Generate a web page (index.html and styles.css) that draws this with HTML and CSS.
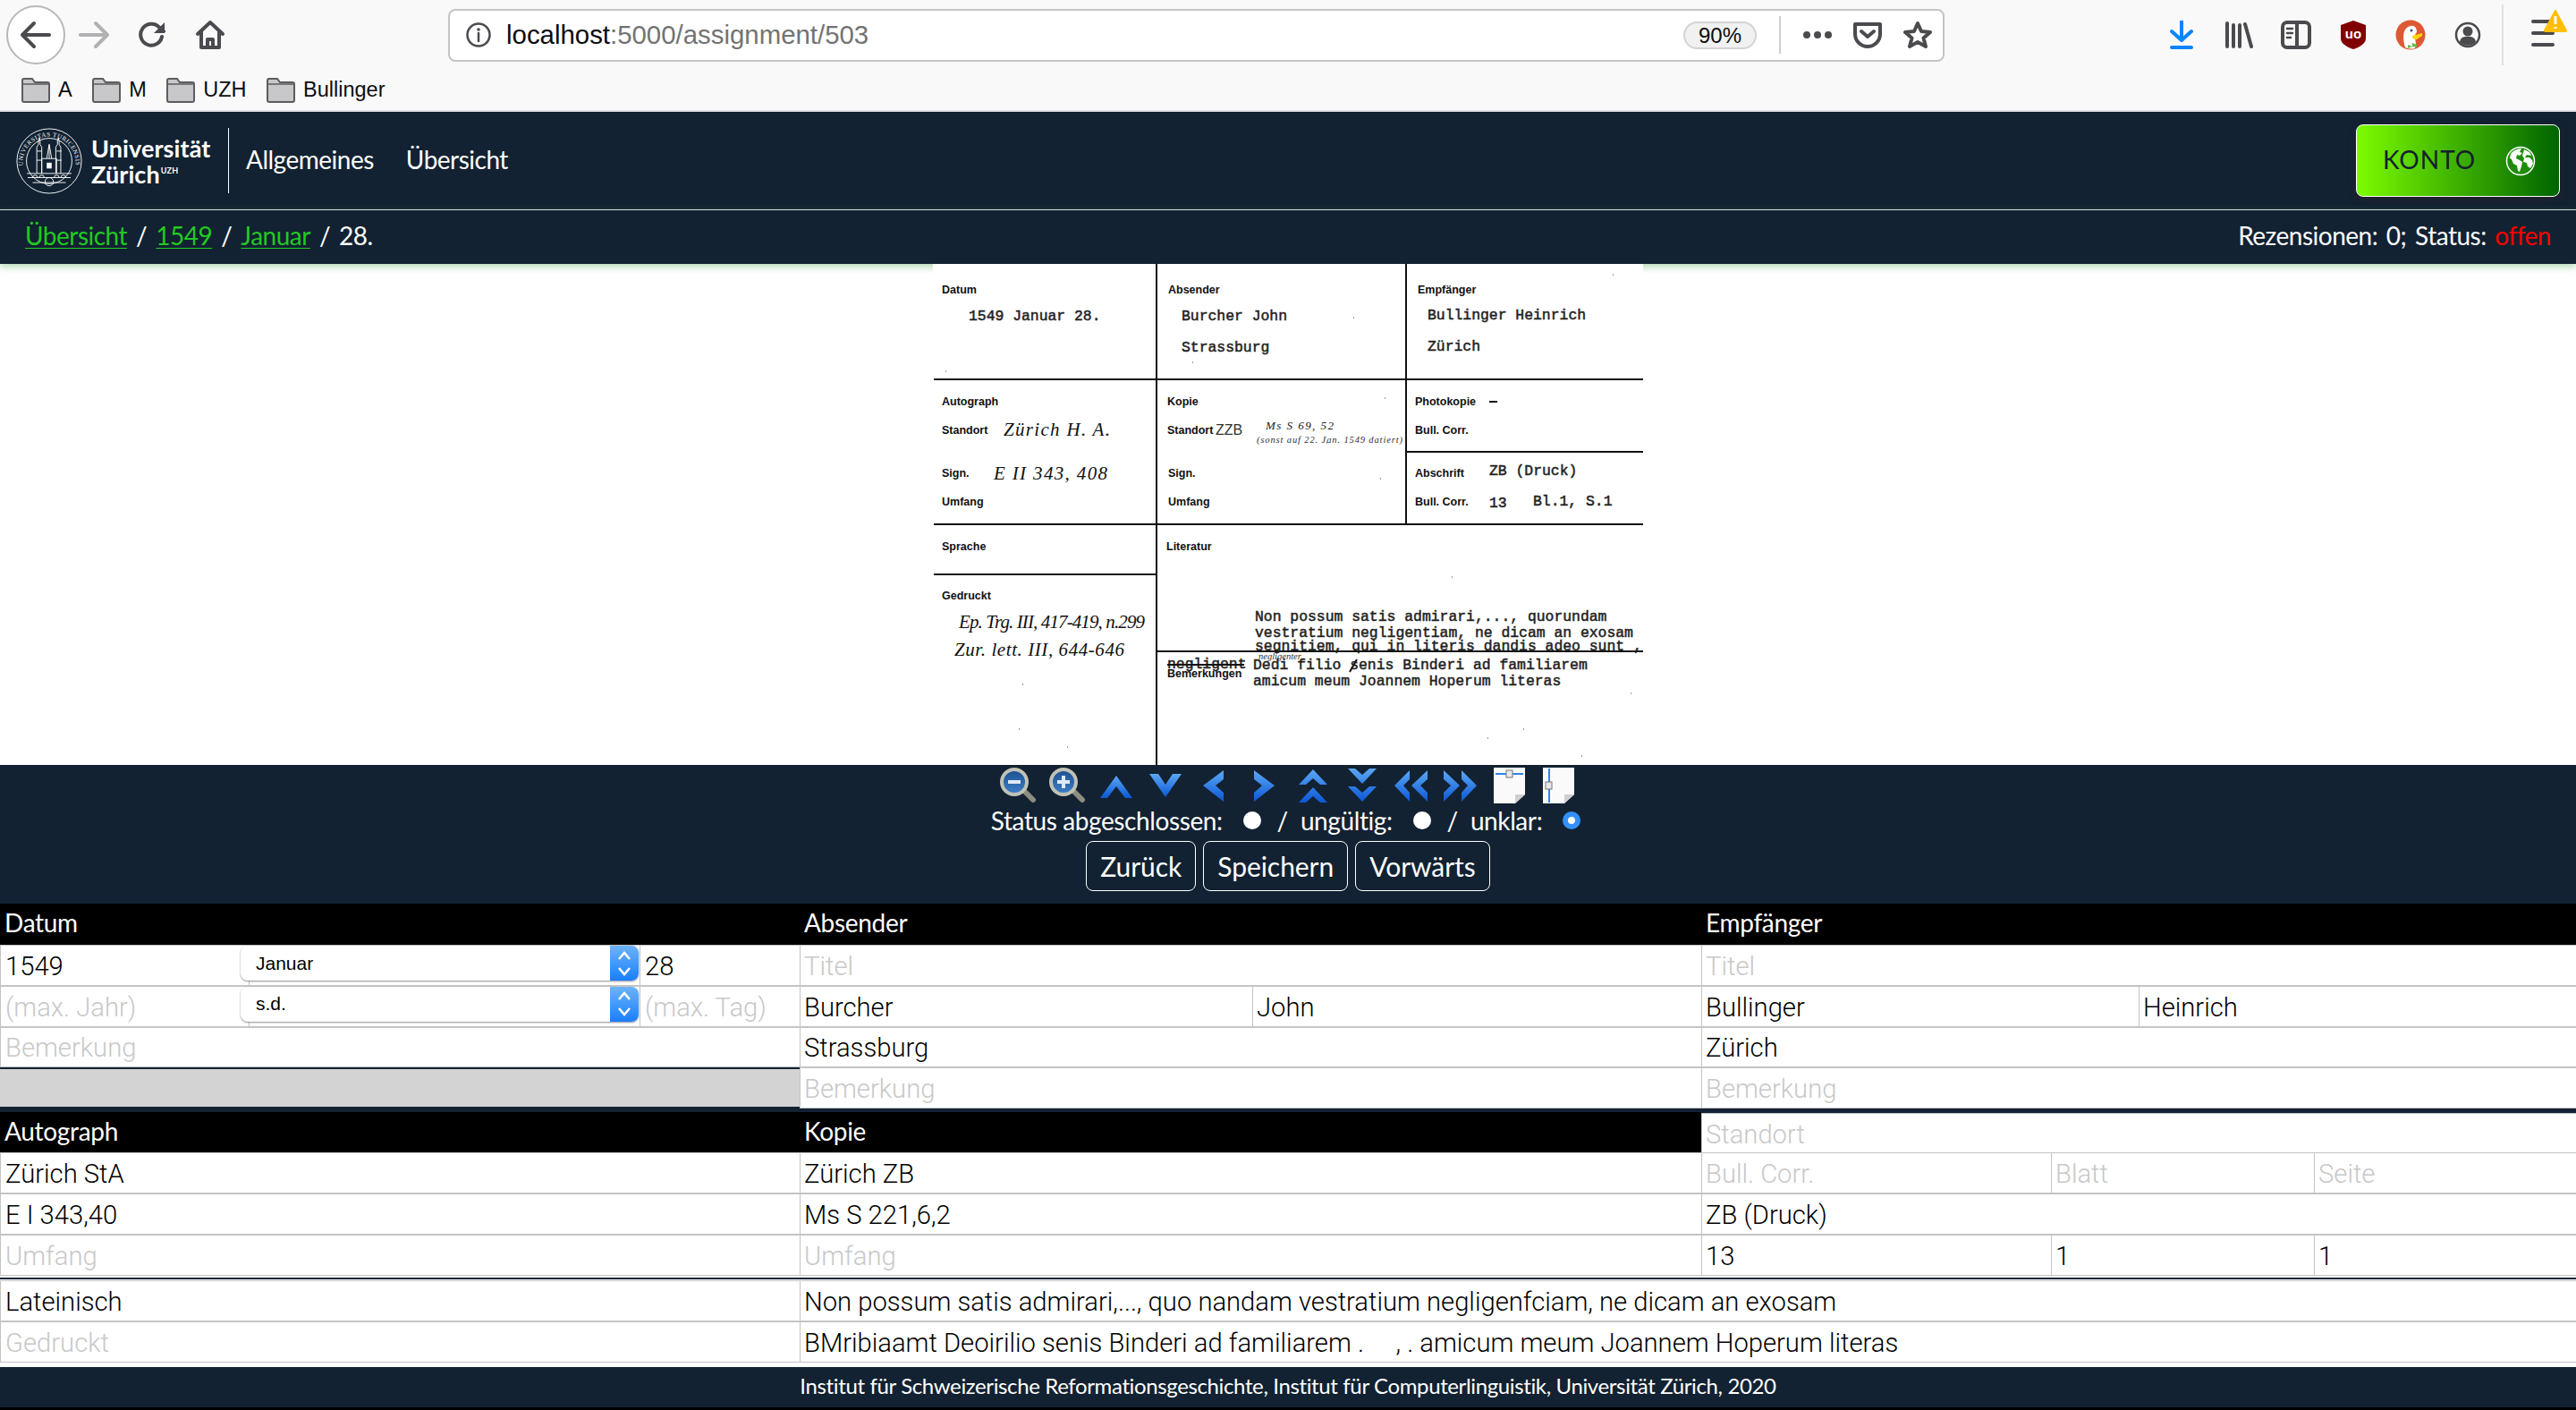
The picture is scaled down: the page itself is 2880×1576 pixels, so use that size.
FILE: index.html

```html
<!DOCTYPE html>
<html>
	<head>
		<meta charset="utf-8">
		<title>Bullinger - Assignment 503</title>
		<link rel="stylesheet" href="styles.css">
	</head>

	<body>
		<!-- browser chrome -->
		<div class="chrome">
			<div class="toolbar">
				<div class="tb-btn tb-back">
					<svg width="36" height="32" viewBox="0 0 36 32"><path class="ico-line" d="M33 16H4M16 3 3 16l13 13"/></svg>
				</div>
				<div class="tb-btn">
					<svg width="36" height="32" viewBox="0 0 36 32"><path class="ico-line ico-faded" d="M3 16h29M20 3l13 13-13 13"/></svg>
				</div>
				<div class="tb-btn">
					<svg width="32" height="32" viewBox="0 0 32 32"><path class="ico-line" d="M27 18A12 12 0 1 1 24 7.500L29 12"/><path class="ico-fill" d="M30 2v12H18z"/></svg>
				</div>
				<div class="tb-btn">
					<svg width="34" height="34" viewBox="0 0 34 34"><path class="ico-line" d="M3 16 17 3l14 13M7 13v18h20V13M14 31v-9h6v9"/></svg>
				</div>

				<div class="urlbar">
					<svg class="url-info" width="28" height="28" viewBox="0 0 28 28"><circle class="ico-thin" cx="14" cy="14" r="12.500"/><path class="ico-thin" d="M14 12v9"/><circle class="ico-fill" cx="14" cy="8" r="1.800"/></svg>
					<span class="url-text">localhost<span class="url-rest">:5000/assignment/503</span></span>
					<span class="url-zoom">90%</span>
					<span class="url-sep"></span>
					<svg class="url-more" width="34" height="10" viewBox="0 0 34 10"><circle class="ico-fill" cx="5" cy="5" r="4"/><circle class="ico-fill" cx="17" cy="5" r="4"/><circle class="ico-fill" cx="29" cy="5" r="4"/></svg>
					<svg class="url-pocket" width="32" height="30" viewBox="0 0 32 30"><path class="ico-line" d="M2 3h28v11a14 14 0 0 1-28 0zM9 11l7 6 7-6"/></svg>
					<svg class="url-star" width="32" height="32" viewBox="0 0 32 32"><path class="ico-line" d="m16 3 4 9 10 1-7.500 6.500L25 29l-9-5-9 5 2.500-9.500L2 13l10-1z"/></svg>
				</div>

				<div class="tb-right">
					<div class="tb-btn">
						<svg width="26" height="32" viewBox="0 0 26 32"><path class="ico-download" d="M13 1v20M2 12l11 10 11-10M2 30h22"/></svg>
					</div>
					<div class="tb-btn">
						<svg width="32" height="32" viewBox="0 0 32 32"><path class="ico-line" d="M3 3v26M10 5v24M17 5v24M23 4l7 25"/></svg>
					</div>
					<div class="tb-btn">
						<svg width="34" height="32" viewBox="0 0 34 32"><rect class="ico-line" x="2" y="2" width="30" height="28" rx="5"/><path class="ico-line" d="M18 2v28"/><path class="ico-thin" d="M7 9h6M7 14h6M7 19h4"/></svg>
					</div>
					<div class="tb-btn">
						<svg width="30" height="34" viewBox="0 0 30 34"><path class="shield" d="M15 1 29 6v15c0 6-8 10-14 12C9 31 1 27 1 21V6z"/><text class="shield-text" x="15" y="21">uo</text></svg>
					</div>
					<div class="tb-btn">
						<svg width="34" height="34" viewBox="0 0 34 34"><circle class="duck-bg" cx="17" cy="17" r="16.500"/><path class="duck-body" d="M11 31C8 20 8 9 17 7c5-1 7 3 7 7-1 1-2 2-2 4 0 5 2 9 0 14a16 16 0 0 1-11-1z"/><circle class="duck-eye" cx="18" cy="12" r="1.500"/><path class="duck-bill" d="M19 18c3-1 8-2 11-3v3l-6 4c-2 1-5 0-5-4z"/><path class="duck-tie" d="M14 28l5 2v-4l5 2v3l-5-1-5 2z"/></svg>
					</div>
					<div class="tb-btn">
						<svg width="30" height="30" viewBox="0 0 30 30"><circle class="ico-thin" cx="15" cy="15" r="13"/><circle class="ico-fill" cx="15" cy="11" r="5.500"/><path class="ico-fill" d="M6 23c1-6 5-6 9-6s8 0 9 6c-5 5-13 5-18 0z"/></svg>
					</div>
					<span class="tb-sep"></span>
					<div class="tb-menu">
						<svg width="42" height="44" viewBox="0 0 42 44"><path class="ico-menu" d="M3 17h22M3 30h22M3 43h22" transform="translate(0 -3)"/><path class="warn" d="M28 2 40 24a1 1 0 0 1-1 1H17a1 1 0 0 1-1-1z"/><path class="warn-mark" d="M28 8v9M28 20v2"/></svg>
					</div>
				</div>
			</div>
			<div class="bookmarks">
				<div class="bookmark">
					<svg class="folder" viewBox="0 0 32 28"><path class="folder-body" d="M1 3a2 2 0 0 1 2-2h9l3 4h14a2 2 0 0 1 2 2v18a2 2 0 0 1-2 2H3a2 2 0 0 1-2-2z"/><path class="folder-top" d="M1 7h30"/></svg>
					A
				</div>
				<div class="bookmark">
					<svg class="folder" viewBox="0 0 32 28"><path class="folder-body" d="M1 3a2 2 0 0 1 2-2h9l3 4h14a2 2 0 0 1 2 2v18a2 2 0 0 1-2 2H3a2 2 0 0 1-2-2z"/><path class="folder-top" d="M1 7h30"/></svg>
					M
				</div>
				<div class="bookmark">
					<svg class="folder" viewBox="0 0 32 28"><path class="folder-body" d="M1 3a2 2 0 0 1 2-2h9l3 4h14a2 2 0 0 1 2 2v18a2 2 0 0 1-2 2H3a2 2 0 0 1-2-2z"/><path class="folder-top" d="M1 7h30"/></svg>
					UZH
				</div>
				<div class="bookmark">
					<svg class="folder" viewBox="0 0 32 28"><path class="folder-body" d="M1 3a2 2 0 0 1 2-2h9l3 4h14a2 2 0 0 1 2 2v18a2 2 0 0 1-2 2H3a2 2 0 0 1-2-2z"/><path class="folder-top" d="M1 7h30"/></svg>
					Bullinger
				</div>
			</div>
		</div>

		<!-- site header -->
		<div class="navbar">
			<svg class="seal" width="74" height="74" viewBox="0 0 80 80">
				<defs><path id="sealArc" d="M9.500 52A32 32 0 1 1 70.500 52"/></defs>
				<circle class="seal-ring" cx="40" cy="40" r="39"/>
				<circle class="seal-ring" cx="40" cy="40" r="27.500"/>
				<text class="seal-text"><textPath href="#sealArc" startOffset="50%">UNIVERSITAS TURICENSIS</textPath></text>
				<path class="seal-ring" d="M25 55V23l2-3v-4l1-4 1 4v4l2 3v32M48 55V23l2-3v-4l1-4 1 4v4l2 3v32M31 55V37h18v18M40 37V20l-3 17M40 20l3 17M25 28h6M25 39h6M49 28h6M49 39h6M13 55h54M14 60h52M20 60a3 3 0 0 1 6 0M28 60a3 3 0 0 1 6 0M46 60a3 3 0 0 1 6 0M54 60a3 3 0 0 1 6 0M20 66h40"/>
				<rect class="seal-fill" x="37" y="42" width="6" height="7"/>
				<circle class="seal-ring" cx="40" cy="65" r="5"/>
			</svg>
			<div class="wordmark">
				<div>Universität</div>
				<div>Zürich<sup class="wordmark-uzh">UZH</sup></div>
			</div>
			<span class="nav-divider"></span>
			<a class="nav-link">Allgemeines</a>
			<a class="nav-link">Übersicht</a>
			<div class="konto">
				KONTO
				<svg class="globe" width="34" height="34" viewBox="0 0 34 34"><circle class="globe-ring" cx="17" cy="17" r="15.500"/><path class="globe-land" d="M6 9c3-4 8-6 12-6l-2 4 3 1-3 3-3-1-1 4 4 2 3 2-1 5-2 6-2-1-1-6-4-2-2-5-2-1zM21 4l6 3 2 4-5-1-2 3h5l3 3 1 4-3 5-3-2-1-4-4-1 1-4-2-3 1-3z"/></svg>
			</div>
		</div>
		<div class="crumbs">
			<div class="crumb-path">
				<a class="crumb-link">Übersicht</a><span class="crumb-sep">/</span><a class="crumb-link">1549</a><span class="crumb-sep">/</span><a class="crumb-link">Januar</a><span class="crumb-sep">/</span>28.
			</div>
			<div class="review-state">Rezensionen: 0; Status: <span class="state-open">offen</span></div>
		</div>

		<!-- scanned index card -->
		<div class="viewer">
			<svg class="scan" width="794" height="560" viewBox="0 0 794 560">
				<path class="scan-rule" d="M1 129H794M1 291H794M1 347H250M250 0V560M529 0V291M529 210H794M250 433H794"/>
				<path class="scan-speck" d="M14 120h1M290 110h1M470 60h1M760 12h1M505 150h1M500 240h1M440 200h1M100 470h1M96 520h1M150 540h1M620 530h1M660 520h1M725 550h1M780 480h1M580 350h1"/>

				<text class="scan-label" x="10" y="33">Datum</text>
				<text class="scan-type" x="40" y="63">1549 Januar 28.</text>
				<text class="scan-label" x="263" y="33">Absender</text>
				<text class="scan-type" x="278" y="63">Burcher John</text>
				<text class="scan-type" x="278" y="98">Strassburg</text>
				<text class="scan-label" x="542" y="33">Empfänger</text>
				<text class="scan-type" x="553" y="62">Bullinger Heinrich</text>
				<text class="scan-type" x="553" y="97">Zürich</text>

				<text class="scan-label" x="10" y="158">Autograph</text>
				<text class="scan-label" x="10" y="190">Standort</text>
				<text class="scan-hand" x="79" y="192" textLength="119">Zürich H. A.</text>
				<text class="scan-label" x="10" y="238">Sign.</text>
				<text class="scan-hand" x="68" y="241" textLength="127">E II 343, 408</text>
				<text class="scan-label" x="10" y="270">Umfang</text>

				<text class="scan-label" x="262" y="158">Kopie</text>
				<text class="scan-label" x="262" y="190">Standort</text>
				<text class="scan-zzb" x="316" y="191">ZZB</text>
				<text class="scan-note" x="372" y="185" textLength="76">Ms S 69, 52</text>
				<text class="scan-tiny" x="362" y="200" textLength="163">(sonst auf 22. Jan. 1549 datiert)</text>
				<text class="scan-label" x="263" y="238">Sign.</text>
				<text class="scan-label" x="263" y="270">Umfang</text>

				<text class="scan-label" x="539" y="158">Photokopie</text>
				<path class="scan-rule" d="M622 154h9"/>
				<text class="scan-label" x="539" y="190">Bull. Corr.</text>
				<text class="scan-label" x="539" y="238">Abschrift</text>
				<text class="scan-type" x="622" y="236">ZB (Druck)</text>
				<text class="scan-label" x="539" y="270">Bull. Corr.</text>
				<text class="scan-type" x="622" y="272">13</text>
				<text class="scan-type" x="671" y="270">Bl.1, S.1</text>

				<text class="scan-label" x="10" y="320">Sprache</text>
				<text class="scan-label" x="261" y="320">Literatur</text>
				<text class="scan-label" x="10" y="375">Gedruckt</text>
				<text class="scan-hand" x="29" y="407" textLength="208">Ep. Trg. III, 417-419, n.299</text>
				<text class="scan-hand" x="24" y="438" textLength="190">Zur. lett. III, 644-646</text>

				<text class="scan-type" x="360" y="399">Non possum satis admirari,..., quorundam</text>
				<text class="scan-type" x="360" y="417">vestratium negligentiam, ne dicam an exosam</text>
				<text class="scan-type" x="360" y="432">segnitiem, qui in literis dandis adeo sunt ,</text>
				<text class="scan-tiny" x="364" y="442">negligenter,</text>
				<text class="scan-type" x="262" y="452">negligent</text>
				<path class="scan-rule" d="M262 448h86M466 456l8-14"/>
				<text class="scan-label" x="262" y="462">Bemerkungen</text>
				<text class="scan-type" x="358" y="453">Dedi filio senis Binderi ad familiarem</text>
				<text class="scan-type" x="358" y="471">amicum meum Joannem Hoperum literas</text>
			</svg>
		</div>

		<!-- viewer controls -->
		<div class="controls">
			<svg width="0" height="0" class="defs-only">
				<defs>
					<linearGradient id="chev" x1="0" y1="0" x2="0" y2="1">
						<stop offset="0" stop-color="#5ba8f5"/>
						<stop offset="1" stop-color="#0d57d6"/>
					</linearGradient>
					<linearGradient id="lens" x1="0" y1="0" x2="0" y2="1">
						<stop offset="0" stop-color="#1c4f8f"/>
						<stop offset="1" stop-color="#3d7fc9"/>
					</linearGradient>
				</defs>
			</svg>
			<div class="icon-strip">
				<svg class="tool" viewBox="0 0 55 43"><path class="lens-handle" d="M33 27l12 12"/><circle class="lens-ring" cx="24" cy="19" r="14"/><path class="lens-mark" d="M17 19h14"/></svg>
				<svg class="tool" viewBox="0 0 55 43"><path class="lens-handle" d="M33 27l12 12"/><circle class="lens-ring" cx="24" cy="19" r="14"/><path class="lens-mark" d="M17 19h14M24 12v14"/></svg>
				<svg class="tool" viewBox="0 0 55 43"><path class="chev" d="M28 12l18 25H38L28 24 18 37h-8z"/></svg>
				<svg class="tool" viewBox="0 0 55 43"><path class="chev" d="M10 10h10l8 12 8-12h10L28 36z"/></svg>
				<svg class="tool" viewBox="0 0 55 43"><path class="chev" d="M15 23 38 6v10l-9 7 9 8v10z"/></svg>
				<svg class="tool" viewBox="0 0 55 43"><path class="chev" d="M40 23 17 6v10l9 7-9 8v10z"/></svg>
				<svg class="tool" viewBox="0 0 55 43"><path class="chev" d="M28 5l16 17h-8l-8-7-8 7h-8zM28 25l16 17h-8l-8-7-8 7h-8z"/></svg>
				<svg class="tool" viewBox="0 0 55 43"><path class="chev" d="M12 4h8l8 7 8-7h8L28 21zM12 24h8l8 7 8-7h8L28 41z"/></svg>
				<svg class="tool" viewBox="0 0 55 43"><path class="chev" d="M9 23 26 6v10l-7 7 7 8v10zM28 23 46 6v10l-8 7 8 8v10z"/></svg>
				<svg class="tool" viewBox="0 0 55 43"><path class="chev" d="M46 23 29 6v10l7 7-7 8v10zM27 23 9 6v10l8 7-8 8v10z"/></svg>
				<svg class="tool" viewBox="0 0 55 43"><path class="page" d="M10 3h35v30L34 43H10z"/><path class="page-fold" d="M34 43V33h11z"/><path class="page-arrow" d="M12 10h31"/><rect class="page-box" x="24" y="6" width="7" height="8"/></svg>
				<svg class="tool" viewBox="0 0 55 43"><path class="page" d="M10 3h35v30L34 43H10z"/><path class="page-fold" d="M34 43V33h11z"/><path class="page-arrow" d="M17 4v38"/><rect class="page-box" x="13" y="19" width="7" height="8"/></svg>
			</div>
			<div class="status-row">
				<span>Status abgeschlossen:</span>
				<input class="status-radio" type="radio" name="status">
				<span class="status-slash">/</span>
				<span>ungültig:</span>
				<input class="status-radio" type="radio" name="status">
				<span class="status-slash">/</span>
				<span>unklar:</span>
				<input class="status-radio" type="radio" name="status" checked>
			</div>
			<div class="actions">
				<button class="action" type="button">Zurück</button>
				<button class="action" type="button">Speichern</button>
				<button class="action" type="button">Vorwärts</button>
			</div>
		</div>

		<!-- metadata form -->
		<div class="form-block">
			<div class="col col-1">
				<div class="col-head">Datum</div>
				<div class="row">
					<input class="cell cell-year" value="1549">
					<div class="select-cell">
						<div class="select">
							<span class="select-text">Januar</span>
							<span class="select-arrows"><svg width="16" height="30" viewBox="0 0 16 30"><path class="select-chev" d="M2 10l6-7 6 7M2 20l6 7 6-7"/></svg></span>
						</div>
					</div>
					<input class="cell" value="28">
				</div>
				<div class="row">
					<input class="cell cell-year" placeholder="(max. Jahr)">
					<div class="select-cell">
						<div class="select">
							<span class="select-text">s.d.</span>
							<span class="select-arrows"><svg width="16" height="30" viewBox="0 0 16 30"><path class="select-chev" d="M2 10l6-7 6 7M2 20l6 7 6-7"/></svg></span>
						</div>
					</div>
					<input class="cell" placeholder="(max. Tag)">
				</div>
				<div class="row"><input class="cell" placeholder="Bemerkung"></div>
				<div class="filler"></div>
			</div>
			<div class="col col-2">
				<div class="col-head">Absender</div>
				<div class="row"><input class="cell" placeholder="Titel"></div>
				<div class="row"><input class="cell cell-last" value="Burcher"><input class="cell" value="John"></div>
				<div class="row"><input class="cell" value="Strassburg"></div>
				<div class="row"><input class="cell" placeholder="Bemerkung"></div>
			</div>
			<div class="col col-3">
				<div class="col-head">Empfänger</div>
				<div class="row"><input class="cell" placeholder="Titel"></div>
				<div class="row"><input class="cell cell-first" value="Bullinger"><input class="cell" value="Heinrich"></div>
				<div class="row"><input class="cell" value="Zürich"></div>
				<div class="row"><input class="cell" placeholder="Bemerkung"></div>
			</div>
		</div>

		<div class="form-block form-copies">
			<div class="col col-1">
				<div class="col-head">Autograph</div>
				<div class="row"><input class="cell" value="Zürich StA"></div>
				<div class="row"><input class="cell" value="E I 343,40"></div>
				<div class="row"><input class="cell" placeholder="Umfang"></div>
			</div>
			<div class="col col-2">
				<div class="col-head">Kopie</div>
				<div class="row"><input class="cell" value="Zürich ZB"></div>
				<div class="row"><input class="cell" value="Ms S 221,6,2"></div>
				<div class="row"><input class="cell" placeholder="Umfang"></div>
			</div>
			<div class="col col-3">
				<div class="row row-top"><input class="cell" placeholder="Standort"></div>
				<div class="row">
					<input class="cell cell-corr" placeholder="Bull. Corr."><input class="cell cell-leaf" placeholder="Blatt"><input class="cell" placeholder="Seite">
				</div>
				<div class="row"><input class="cell" value="ZB (Druck)"></div>
				<div class="row">
					<input class="cell cell-corr" value="13"><input class="cell cell-leaf" value="1"><input class="cell" value="1">
				</div>
			</div>
		</div>

		<div class="form-block form-text">
			<div class="col col-1">
				<div class="row"><input class="cell" value="Lateinisch"></div>
				<div class="row"><input class="cell" placeholder="Gedruckt"></div>
			</div>
			<div class="col col-wide">
				<div class="row"><input class="cell" value="Non possum satis admirari,..., quo nandam vestratium negligenfciam, ne dicam an exosam"></div>
				<div class="row"><input class="cell" value="BMribiaamt Deoirilio senis Binderi ad familiarem .     , . amicum meum Joannem Hoperum literas"></div>
			</div>
		</div>

		<div class="footer">Institut für Schweizerische Reformationsgeschichte, Institut für Computerlinguistik, Universität Zürich, 2020</div>
		<div class="window-edge"></div>
	</body>
</html>
```

FILE: styles.css

```css
html, body {
	margin: 0;
	padding: 0;
}

body {
	width: 2880px;
	height: 1576px;
	overflow: hidden;
	background-color: #122232;
	color: white;
	font-family: Lato, "Noto Sans", sans-serif;
	font-size: 28px;
}

/* browser chrome */
.chrome {
	height: 123px;
	background-color: #f9f9fa;
	border-bottom: 2px solid #e0e0e2;
	color: #0c0c0d;
	font-family: "Liberation Sans", sans-serif;
}

.toolbar {
	height: 78px;
	display: flex;
	align-items: center;
	padding-left: 8px;
}

.tb-btn {
	width: 64px;
	height: 64px;
	margin-right: 1px;
	display: flex;
	align-items: center;
	justify-content: center;
	flex-shrink: 0;
}

.tb-back {
	height: 66px;
	width: 66px;
	margin-right: 0;
	margin-left: -1px;
	box-sizing: border-box;
	background-color: white;
	border: 2px solid #b8b8ba;
	border-radius: 50%;
}

.ico-line {
	fill: none;
	stroke: #4a4a4f;
	stroke-width: 4;
	stroke-linecap: round;
	stroke-linejoin: round;
}

.ico-faded {
	stroke: #b1b1b3;
}

.ico-thin {
	fill: none;
	stroke: #4a4a4f;
	stroke-width: 2.500;
	stroke-linecap: round;
}

.ico-fill {
	fill: #4a4a4f;
}

.urlbar {
	width: 1673px;
	height: 59px;
	margin-left: 233px;
	box-sizing: border-box;
	display: flex;
	align-items: center;
	background-color: white;
	border: 2px solid #c4c4c6;
	border-radius: 8px;
	flex-shrink: 0;
}

.url-info {
	margin-left: 18px;
}

.url-text {
	margin-left: 17px;
	font-size: 29.400px;
	flex-grow: 1;
}

.url-rest {
	color: #737373;
}

.url-zoom {
	width: 82px;
	height: 31px;
	box-sizing: border-box;
	line-height: 27px;
	text-align: center;
	font-size: 24px;
	background-color: #f1f1f1;
	border: 2px solid #d4d4d4;
	border-radius: 16px;
}

.url-sep {
	width: 2px;
	height: 42px;
	margin: 0 24px 0 25px;
	background-color: #cfcfcf;
}

.url-more {
	margin-right: 23px;
}

.url-pocket {
	margin-right: 24px;
}

.url-star {
	margin-right: 12px;
}

.tb-right {
	margin-left: 233px;
	display: flex;
	align-items: center;
}

.tb-right .tb-btn {
	margin-right: 0;
}

.tb-sep {
	width: 2px;
	height: 68px;
	margin-left: 6px;
	background-color: #e0e0e2;
}

.tb-menu {
	margin-left: 30px;
	margin-top: -8px;
}

.ico-download {
	fill: none;
	stroke: #0a84ff;
	stroke-width: 4;
	stroke-linecap: round;
	stroke-linejoin: round;
}

.ico-menu {
	fill: none;
	stroke: #4a4a4f;
	stroke-width: 4;
	stroke-linecap: round;
}

.warn {
	fill: #ffbf00;
	stroke: #ffbf00;
	stroke-width: 2;
	stroke-linejoin: round;
}

.warn-mark {
	fill: none;
	stroke: white;
	stroke-width: 3;
}

.shield {
	fill: #800000;
}

.shield-text {
	fill: white;
	font-family: "Liberation Sans", sans-serif;
	font-size: 15px;
	font-weight: bold;
	text-anchor: middle;
}

.duck-bg {
	fill: #de5833;
}

.duck-body {
	fill: white;
}

.duck-eye {
	fill: #2d4f8e;
}

.duck-bill {
	fill: #fdd20a;
}

.duck-tie {
	fill: #65bc46;
}

.bookmarks {
	height: 45px;
	display: flex;
	align-items: center;
	gap: 22.500px;
	padding-left: 24px;
	font-size: 23.500px;
}

.bookmark {
	display: flex;
	align-items: center;
	gap: 9px;
}

.folder {
	width: 32px;
	height: 28px;
}

.folder-body {
	fill: #c8c8ca;
	stroke: #5c5c61;
	stroke-width: 2;
}

.folder-top {
	fill: none;
	stroke: #5c5c61;
	stroke-width: 1.500;
}

/* site header */
.navbar {
	height: 109px;
	display: flex;
	align-items: center;
	padding: 0 18px;
	border-bottom: 1px solid #e8e8e8;
}

.seal-ring {
	fill: none;
	stroke: white;
	stroke-width: 1;
}

.seal-fill {
	fill: white;
}

.seal-text {
	fill: white;
	font-family: "Liberation Serif", serif;
	font-size: 7.500px;
	letter-spacing: 0.6px;
	text-anchor: middle;
}

.wordmark {
	width: 153px;
	margin-left: 10px;
	font-size: 27px;
	font-weight: 700;
	line-height: 29px;
	letter-spacing: 0.1px;
}

.wordmark-uzh {
	font-size: 9px;
	line-height: 0;
	vertical-align: 11px;
	margin-left: 1px;
}

.nav-divider {
	width: 1px;
	height: 73px;
	background-color: white;
}

.nav-link {
	margin-left: 19px;
	margin-bottom: 3px;
	font-size: 28px;
	letter-spacing: -0.5px;
}

.nav-link + .nav-link {
	margin-left: 36px;
}

.konto {
	width: 228px;
	height: 81px;
	margin-left: auto;
	box-sizing: border-box;
	display: flex;
	align-items: center;
	justify-content: space-between;
	padding: 0 26px 3px 29px;
	color: #14202e;
	font-size: 28px;
	letter-spacing: 1px;
	background: linear-gradient(to right, #7cfc00, #006400);
	border: 1px solid white;
	border-radius: 8px;
	box-shadow: 0 3px 8px rgba(60, 30, 40, 0.5);
}

.globe {
	margin-top: 4px;
}

.globe-ring {
	fill: #1d8d08;
	stroke: white;
	stroke-width: 1.500;
}

.globe-land {
	fill: white;
}

.crumbs {
	position: relative;
	z-index: 1;
	height: 60px;
	box-sizing: border-box;
	display: flex;
	align-items: center;
	justify-content: space-between;
	padding: 0 28px 5px 28px;
	letter-spacing: -0.5px;
	box-shadow: 0 3px 8px rgba(120, 190, 120, 0.6);
}

.crumb-link {
	color: #22c922;
	text-decoration: underline;
	text-underline-offset: 3px;
	text-decoration-thickness: 1px;
}

.crumb-sep {
	margin: 0 10px;
}

.review-state {
	word-spacing: 3px;
}

.state-open {
	color: #ff0000;
}

/* scan */
.viewer {
	height: 560px;
	background-color: white;
	display: flex;
	justify-content: center;
}

.scan {
	position: relative;
	z-index: 2;
	background-color: white;
}

.scan-rule {
	fill: none;
	stroke: #111;
	stroke-width: 2;
}

.scan-speck {
	fill: none;
	stroke: #777;
	stroke-width: 1.500;
}

.scan-label {
	font-family: "Liberation Sans", sans-serif;
	font-size: 12.500px;
	font-weight: bold;
	fill: #111;
}

.scan-type {
	font-family: "Liberation Mono", monospace;
	font-size: 16.400px;
	fill: #222;
	stroke: #222;
	stroke-width: 0.500;
}

.scan-hand {
	font-family: "Liberation Serif", serif;
	font-style: italic;
	font-size: 21px;
	fill: #111;
}

.scan-zzb {
	font-family: "Liberation Sans", sans-serif;
	font-size: 16px;
	fill: #333;
}

.scan-note {
	font-family: "Liberation Serif", serif;
	font-style: italic;
	font-size: 13px;
	fill: #222;
}

.scan-tiny {
	font-family: "Liberation Serif", serif;
	font-style: italic;
	font-size: 10.500px;
	fill: #333;
}

/* controls */
.controls {
	height: 155px;
	display: flex;
	flex-direction: column;
	align-items: center;
}

.defs-only {
	position: absolute;
}

.icon-strip {
	height: 43px;
	display: flex;
}

.tool {
	width: 55px;
	height: 43px;
}

.chev {
	fill: url(#chev);
}

.lens-handle {
	fill: none;
	stroke: #8d8d80;
	stroke-width: 6;
	stroke-linecap: round;
}

.lens-ring {
	fill: url(#lens);
	stroke: #c0c2b6;
	stroke-width: 4;
}

.lens-mark {
	fill: none;
	stroke: #dfe8f2;
	stroke-width: 4;
}

.page {
	fill: #fafafa;
}

.page-fold {
	fill: #cfcfcf;
}

.page-arrow {
	fill: none;
	stroke: #2f86e8;
	stroke-width: 2;
}

.page-box {
	fill: #e8e8e8;
	stroke: #777;
	stroke-width: 1;
}

.status-row {
	height: 38px;
	padding-right: 5px;
	display: flex;
	align-items: center;
	font-size: 28px;
	letter-spacing: -0.4px;
}

.status-slash {
	margin-right: 14px;
}

.status-radio {
	appearance: none;
	-webkit-appearance: none;
	width: 20px;
	height: 20px;
	margin: 0 18px 0 23px;
	border-radius: 50%;
	background-color: white;
}

.status-radio:checked {
	box-sizing: border-box;
	border: 6px solid #3390ff;
	margin-right: 0;
}

.actions {
	margin-top: 4px;
	display: flex;
	gap: 8px;
}

.action {
	height: 56px;
	padding: 0 15px;
	background-color: transparent;
	color: white;
	font-family: Lato, "Noto Sans", sans-serif;
	font-size: 30px;
	letter-spacing: -0.05px;
	border: 1px solid white;
	border-radius: 8px;
}

/* metadata form */
.form-block {
	display: flex;
}

.col {
	display: flex;
	flex-direction: column;
	min-width: 0;
}

.col-1 {
	flex: 0 0 894px;
}

.col-2 {
	flex: 0 0 1008px;
}

.col-3 {
	flex: 1;
}

.col-wide {
	flex: 1;
}

.col-head {
	height: 46px;
	box-sizing: border-box;
	padding-left: 5px;
	line-height: 42px;
	font-size: 28px;
	letter-spacing: -0.3px;
	background-color: black;
	color: white;
}

.row {
	height: 45.750px;
	display: flex;
	background-color: white;
}

.cell {
	flex: 1;
	min-width: 0;
	height: 100%;
	margin: 0;
	padding: 2px 0 0 4px;
	box-sizing: border-box;
	font-family: Roboto, "Liberation Sans", sans-serif;
	font-weight: 300;
	font-size: 29.200px;
	color: black;
	background-color: white;
	border: 1px solid #c4c4c4;
	border-right: none;
	border-radius: 0;
	outline: none;
}

.col-1 .cell {
	padding-left: 5px;
}

.cell::placeholder {
	color: #c8c8c8;
	opacity: 1;
}

.cell-year {
	flex: 0 0 278px;
}

.select-cell {
	flex: 0 0 437px;
	box-sizing: border-box;
	border-left: 1px solid #c4c4c4;
	border-top: 1px solid #c4c4c4;
	border-bottom: 1px solid #c4c4c4;
}

.select {
	width: 445px;
	height: 39px;
	margin-left: -10px;
	position: relative;
	display: flex;
	align-items: center;
	justify-content: space-between;
	background-color: white;
	color: black;
	font-family: "Liberation Sans", sans-serif;
	font-size: 21px;
	border-radius: 8px;
	box-shadow: 0 1px 2px rgba(0, 0, 0, 0.45);
	overflow: hidden;
}

.select-text {
	margin-left: 17px;
}

.select-arrows {
	width: 32px;
	height: 100%;
	display: flex;
	align-items: center;
	justify-content: center;
	background: linear-gradient(to bottom, #6cb3fa, #1a7ffb);
}

.select-chev {
	fill: none;
	stroke: white;
	stroke-width: 2.500;
}

.filler {
	height: 42px;
	margin-top: 2px;
	background-color: #d3d3d3;
}

.cell-last {
	flex: 0 0 506px;
}

.cell-first {
	flex: 0 0 489px;
}

.form-copies {
	margin-top: 4px;
	border-bottom: 2px solid white;
}

.form-copies .col-head {
	height: 45px;
	line-height: 42px;
}

.form-copies .row {
	height: 46px;
}

.form-copies .row-top {
	height: 45px;
	margin-top: 1px;
	margin-bottom: -1px;
}

.cell-corr {
	flex: 0 0 391px;
}

.cell-leaf {
	flex: 0 0 294px;
}

.form-text {
	margin-top: 2px;
	padding-bottom: 5px;
	background-color: white;
	border-top: 1px solid white;
}

.form-text .row {
	height: 46px;
}

.footer {
	height: 45px;
	line-height: 42px;
	text-align: center;
	font-size: 24px;
	letter-spacing: -0.37px;
}

.window-edge {
	height: 3px;
	background-color: black;
}
```
